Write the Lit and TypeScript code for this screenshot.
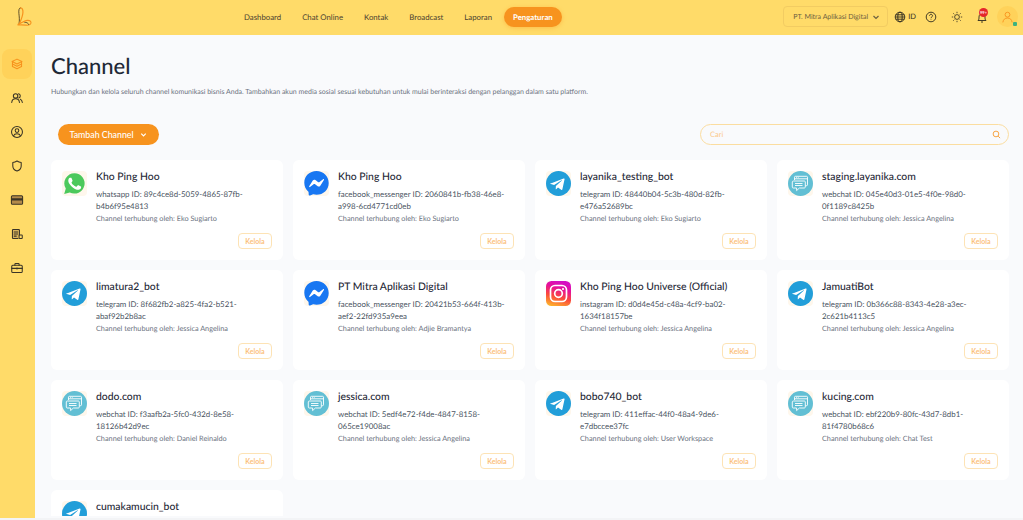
import { LitElement, css, html, svg, nothing } from 'lit'
import { customElement } from 'lit/decorators.js'

type Kind = "whatsapp" | "messenger" | "telegram" | "webchat" | "instagram"

interface Channel {
  name: string
  kind: Kind
  label?: string
  id?: string
  by?: string
}

const channels: Channel[] = [
  { name: "Kho Ping Hoo", kind: "whatsapp", label: "whatsapp", id: "89c4ce8d-5059-4865-87fb-b4b6f95e4813", by: "Eko Sugiarto" },
  { name: "Kho Ping Hoo", kind: "messenger", label: "facebook_messenger", id: "2060841b-fb38-46e8-a998-6cd4771cd0eb", by: "Eko Sugiarto" },
  { name: "layanika_testing_bot", kind: "telegram", label: "telegram", id: "48440b04-5c3b-480d-82fb-e476a52689bc", by: "Eko Sugiarto" },
  { name: "staging.layanika.com", kind: "webchat", label: "webchat", id: "045e40d3-01e5-4f0e-98d0-0f1189c8425b", by: "Jessica Angelina" },
  { name: "limatura2_bot", kind: "telegram", label: "telegram", id: "8f682fb2-a825-4fa2-b521-abaf92b2b8ac", by: "Jessica Angelina" },
  { name: "PT Mitra Aplikasi Digital", kind: "messenger", label: "facebook_messenger", id: "20421b53-664f-413b-aef2-22fd935a9eea", by: "Adjie Bramantya" },
  { name: "Kho Ping Hoo Universe (Official)", kind: "instagram", label: "instagram", id: "d0d4e45d-c48a-4cf9-ba02-1634f18157be", by: "Jessica Angelina" },
  { name: "JamuatiBot", kind: "telegram", label: "telegram", id: "0b366c88-8343-4e28-a3ec-2c621b4113c5", by: "Jessica Angelina" },
  { name: "dodo.com", kind: "webchat", label: "webchat", id: "f3aafb2a-5fc0-432d-8e58-18126b42d9ec", by: "Daniel Reinaldo" },
  { name: "jessica.com", kind: "webchat", label: "webchat", id: "5edf4e72-f4de-4847-8158-065ce19008ac", by: "Jessica Angelina" },
  { name: "bobo740_bot", kind: "telegram", label: "telegram", id: "411effac-44f0-48a4-9de6-e7dbccee37fc", by: "User Workspace" },
  { name: "kucing.com", kind: "webchat", label: "webchat", id: "ebf220b9-80fc-43d7-8db1-81f4780b68c6", by: "Chat Test" },
  // only the top of this card is on screen
  { name: "cumakamucin_bot", kind: "telegram" },
]

const navItems = ["Dashboard", "Chat Online", "Kontak", "Broadcast", "Laporan", "Pengaturan"]

const brandIcons: Record<Kind, unknown> = {
  whatsapp: svg`
    <path fill="#4cc95c" d="M12.6 2.2a10.2 10.2 0 0 0-8.8 15.4L2.2 23l5.6-1.5A10.2 10.2 0 1 0 12.6 2.2z"/>
    <path fill="#fff" d="M9.600 7.200c-.2-.5-.4-.5-.7-.5h-.6c-.2 0-.6.1-.9.4-.3.3-1.100 1.100-1.100 2.700s1.200 3.100 1.300 3.300c.2.200 2.200 3.500 5.400 4.800 2.700 1.100 3.200.9 3.800.8.600-.1 1.900-.8 2.100-1.500.3-.7.3-1.300.2-1.500-.1-.1-.3-.2-.6-.4l-2.100-1.100c-.3-.1-.5-.2-.7.2l-1 1.200c-.2.200-.4.300-.7.100-.3-.2-1.300-.5-2.600-1.600-1-.9-1.600-1.900-1.800-2.200-.2-.3 0-.5.100-.7l.5-.6c.2-.2.200-.3.300-.5.100-.2.100-.4 0-.6l-.9-2.300z"/>`,
  messenger: svg`
    <path fill="#1877f2" d="M12.500 0C5.600 0 .3 5 .3 11.800c0 3.600 1.500 6.700 3.900 8.800.2.200.3.500.4.800l.1 2.200c0 .700.700 1.200 1.400.900l2.500-1.100c.2-.1.500-.1.700-.1 1 .3 2.100.5 3.200.5 6.900 0 12.200-5 12.200-11.800S19.400 0 12.500 0z"/>
    <path fill="#fff" d="M5.200 15.300l3.600-5.700c.6-.9 1.800-1.100 2.600-.5l2.900 2.100c.3.200.6.200.9 0l3.900-3c.5-.4 1.200.2.800.8l-3.600 5.700c-.6.900-1.800 1.100-2.600.5l-2.900-2.100c-.3-.2-.6-.2-.9 0l-3.900 3c-.5.400-1.200-.2-.8-.8z"/>`,
  telegram: svg`
    <circle cx="12.500" cy="12.500" r="12.500" fill="#229ed9"/>
    <path fill="#fff" d="M5.400 12.300l12.200-4.800c.6-.2 1.100.1.900 1l-2.100 9.800c-.1.700-.6.900-1.200.5l-3.200-2.400-1.600 1.500c-.2.200-.3.300-.7.300l.2-3.300 6-5.400c.3-.2-.1-.4-.4-.2l-7.400 4.700-3.200-1c-.7-.2-.7-.7.100-1z"/>`,
  webchat: svg`
    <circle cx="12.500" cy="12.500" r="12.500" fill="#62bfd4"/>
    <g fill="none" stroke="#fff" stroke-width=".9" stroke-linejoin="round">
      <path d="M6.500 9V6.200c0-.5.400-.9.900-.9h11.200c.5 0 .9.400.9.900v7.600c0 .5-.4.900-.9.900h-1.200"/>
      <path d="M6.500 7.800h13M8 6.600h.8M9.800 6.600h.8"/>
      <path d="M5.200 10h11.200c.5 0 .9.400.9.900v5.200c0 .5-.4.900-.9.900h-5l-2.800 2.600V17H5.200c-.5 0-.9-.4-.9-.9v-5.200c0-.5.400-.9.900-.9z"/>
      <path d="M7 12.500h7.500M7 14.500h7.500"/>
    </g>`,
  instagram: svg`
    <defs>
      <linearGradient id="ig" x1="0.200" y1="1" x2="0.500" y2="0">
        <stop offset="0" stop-color="#fdb52b"/>
        <stop offset="0.400" stop-color="#fb4a3c"/>
        <stop offset="0.750" stop-color="#e5109c"/>
        <stop offset="1" stop-color="#d40fc4"/>
      </linearGradient>
    </defs>
    <rect width="25" height="25" rx="5.500" fill="url(#ig)"/>
    <rect x="4.500" y="4.500" width="16" height="16" rx="4.500" fill="none" stroke="#fff" stroke-width="1.700"/>
    <circle cx="12.500" cy="12.500" r="3.800" fill="none" stroke="#fff" stroke-width="1.700"/>
    <circle cx="17" cy="8" r="1.100" fill="#fff"/>`,
}

const sideIcons = [
  svg`<path d="M10 3l7 3.500-7 3.500-7-3.500z"/><path d="M3.500 10L10 13.200 16.500 10"/><path d="M3.500 13.500L10 16.800l6.500-3.300"/><path d="M3.500 6.800v6.700M16.500 6.800v6.700"/>`,
  svg`<circle cx="8" cy="7" r="3.200"/><path d="M2.500 16.500c.3-3.400 2.500-5.300 5.500-5.300s5.200 1.900 5.500 5.300"/><path d="M12 3.900a3.200 3.200 0 0 1 .5 6.200M14.800 11.700c1.700.8 2.600 2.500 2.800 4.800"/>`,
  svg`<circle cx="10" cy="10" r="7.800"/><circle cx="10" cy="8" r="2.600"/><path d="M5 15.500c.8-2 2.700-3 5-3s4.200 1 5 3"/>`,
  svg`<path d="M10 2.800c2 1.300 3.800 1.900 6 2.100v5c0 3.500-2.300 6-6 7.300-3.700-1.300-6-3.800-6-7.300v-5c2.200-.2 4-.8 6-2.100z"/>`,
  svg`<rect x="2" y="4" width="16" height="12" rx="1.500" fill="#b38a4a"/><rect x="2" y="7.500" width="16" height="3.200" fill="currentColor" stroke="none"/>`,
  svg`<path d="M13.500 11V4.500c0-.6-.4-1-1-1h-8c-.6 0-1 .4-1 1v11c0 .6.400 1 1 1h7" fill="#d9b35c"/><path d="M6 7h5M6 10h5M6 13h3"/><rect x="13" y="11.500" width="4.500" height="5" rx=".8"/>`,
  svg`<rect x="2.500" y="6" width="15" height="10.500" rx="1.500"/><path d="M7 6V4.500c0-.6.400-1 1-1h4c.6 0 1 .4 1 1V6M2.500 10.500h15M10 9.500v2"/>`,
]

@customElement("app-root")
export class AppRoot extends LitElement {
  renderCard(c: Channel) {
    return html`
      <article class="card">
        <svg class="brand" viewBox="0 0 25 25">${brandIcons[c.kind]}</svg>
        <div class="info">
          <h2>${c.name}</h2>
          ${c.id
            ? html`
                <p class="id">${`${c.label} ID: ${c.id}`}</p>
                <p class="by">${`Channel terhubung oleh: ${c.by}`}</p>
                <div class="actions"><button class="manage">Kelola</button></div>
              `
            : nothing}
        </div>
      </article>
    `
  }

  render() {
    return html`
      <header>
        <svg class="logo" viewBox="0 0 15 19" fill="none" stroke-linecap="round">
          <path d="M3.500.8C2 1 1.600 3 1.900 6.500c.3 3 .8 6.500.2 10" stroke="#3a2d1c" stroke-width=".8"/>
          <path d="M3.500.8c2 .2 2.600 2.400 2.400 4.900-.3 3.800-1.900 7.200-3.400 10.800" stroke="#f7931e" stroke-width="1.200"/>
          <path d="M1 17.300c3-.9 5.800-3.400 9-3.900 2.800-.4 4.300 1.100 3.900 2.800-.5 1.800-2.800 2.300-5.300 1.900-2.600-.3-5.400-.3-7.600-.1" stroke="#f7931e" stroke-width="1.100"/>
          <path d="M7.800 15.500c1.700-.4 3.300.3 3.900 2" stroke="#3a2d1c" stroke-width=".7"/>
        </svg>
        <nav>
          ${navItems.map((n) => html`<a class=${n === "Pengaturan" ? "active" : ""}>${n}</a>`)}
        </nav>
        <div class="tools">
          <div class="company">
            <span>PT. Mitra Aplikasi Digital</span>
            <svg viewBox="0 0 10 10" fill="none" stroke="currentColor" stroke-width="1.200"><path d="M2.500 4l2.500 2.500L7.500 4"/></svg>
          </div>
          <div class="lang">
            <svg class="tool" viewBox="0 0 12 12" fill="none" stroke="#2f2a1e" stroke-width=".9"><circle cx="6" cy="6" r="4.800"/><ellipse cx="6" cy="6" rx="2.200" ry="4.800"/><path d="M1.200 6h9.600M1.800 3.800h8.400M1.800 8.200h8.400"/></svg>
            <span>ID</span>
          </div>
          <svg class="tool help" viewBox="0 0 12 12" fill="none" stroke="#2f2a1e" stroke-width=".9"><circle cx="6" cy="6" r="4.800"/><path d="M4.500 4.800c0-2 3-2 3 0 0 1.200-1.500 1.100-1.500 2.400"/><path d="M6 8.500v.5"/></svg>
          <svg class="tool sun" viewBox="0 0 12 12" fill="none" stroke="#2f2a1e" stroke-width=".8"><circle cx="6" cy="6" r="2.400"/><path d="M6 .8v1.400M6 9.800v1.400M.8 6h1.400M9.800 6h1.400M2.300 2.300l1 1M8.700 8.700l1 1M2.300 9.700l1-1M8.700 3.300l1-1"/></svg>
          <div class="bell">
            <svg class="tool" viewBox="0 0 12 12" fill="none" stroke="#2f2a1e" stroke-width=".9"><path d="M2 9.500c1-.8 1-2 1-3.500 0-2 1.300-3.300 3-3.300S9 4 9 6c0 1.500 0 2.700 1 3.500z"/><path d="M5 11h2"/></svg>
            <span class="badge">99+</span>
          </div>
          <div class="avatar">
            <svg viewBox="0 0 14 14" fill="none" stroke="#f7931e" stroke-width="1"><circle cx="7" cy="4.500" r="2.600"/><path d="M2 12.800c.3-3 2.300-4.700 5-4.700s4.700 1.700 5 4.700"/></svg>
            <span class="dot"></span>
          </div>
        </div>
      </header>
      <div class="body">
        <aside>
          ${sideIcons.map((icon, i) => html`
            <div class="side ${i === 0 ? "active" : ""}">
              <svg viewBox="0 0 20 20" fill="none" stroke="currentColor" stroke-width="1.500" stroke-linecap="round" stroke-linejoin="round">${icon}</svg>
            </div>
          `)}
        </aside>
        <main>
          <h1>Channel</h1>
          <p class="lead">Hubungkan dan kelola seluruh channel komunikasi bisnis Anda. Tambahkan akun media sosial sesuai kebutuhan untuk mulai berinteraksi dengan pelanggan dalam satu platform.</p>
          <div class="toolbar">
            <button class="add">
              Tambah Channel
              <svg viewBox="0 0 10 10" fill="none" stroke="#fff" stroke-width="1.300"><path d="M2.500 4l2.500 2.500L7.500 4"/></svg>
            </button>
            <div class="search">
              <span>Cari</span>
              <svg viewBox="0 0 12 12" fill="none" stroke="#f7931e" stroke-width="1.100"><circle cx="5.300" cy="5.300" r="3.800"/><path d="M8.200 8.200l2.600 2.600"/></svg>
            </div>
          </div>
          <section class="grid">${channels.map((c) => this.renderCard(c))}</section>
        </main>
      </div>
    `
  }

  static styles = css`
    :host {
      display: block;
      height: 520px;
      overflow: hidden;
      font-family: Lato, "Liberation Sans", sans-serif;
      text-rendering: geometricPrecision;
      color: #1f2937;
      background: #f3f4f6;
    }

    header {
      display: flex;
      align-items: center;
      box-sizing: border-box;
      height: 35px;
      padding-bottom: 2px;
      background: #ffdb69;
    }
    .logo {
      width: 15px;
      height: 19px;
      margin-left: 17px;
      margin-right: 203px;
    }
    nav {
      display: flex;
      gap: 3px;
    }
    nav a {
      display: flex;
      align-items: center;
      height: 20px;
      padding: 0 9px;
      font-size: 7.800px;
      color: #4a4030;
      border-radius: 10px;
    }
    nav a.active {
      background: #f7931e;
      color: #fff;
      font-weight: 700;
      box-shadow: 0 1px 4px rgba(247, 147, 30, 0.4);
    }
    .tools {
      display: flex;
      align-items: center;
      margin-left: auto;
      margin-right: 5px;
    }
    .company {
      display: flex;
      align-items: center;
      justify-content: space-between;
      box-sizing: border-box;
      width: 105px;
      height: 21px;
      padding: 0 6px 0 9px;
      border: 1px solid #f2cc62;
      border-radius: 4px;
      font-size: 7px;
      white-space: nowrap;
      color: #6d6040;
      margin-right: 6px;
    }
    .company svg {
      width: 10px;
      height: 10px;
    }
    .tool {
      display: block;
      width: 12px;
      height: 12px;
    }
    .lang {
      display: flex;
      align-items: center;
      gap: 2px;
      font-size: 7.500px;
      color: #2f2a1e;
    }
    .help {
      margin-left: 9px;
    }
    .sun {
      margin-left: 14px;
    }
    .bell {
      position: relative;
      margin-left: 13px;
    }
    .badge {
      position: absolute;
      top: -3px;
      left: 3px;
      width: 9px;
      height: 9px;
      border-radius: 50%;
      background: #e5262b;
      color: #fff;
      font-size: 4px;
      font-weight: 700;
      line-height: 9px;
      text-align: center;
    }
    .avatar {
      position: relative;
      display: flex;
      align-items: center;
      justify-content: center;
      width: 21px;
      height: 21px;
      margin-left: 9px;
      border-radius: 50%;
      background: #ffd25a;
    }
    .avatar svg {
      width: 13px;
      height: 14px;
    }
    .dot {
      position: absolute;
      right: 1px;
      bottom: 1px;
      width: 4px;
      height: 4px;
      background: #3fb27f;
      border-radius: 1px;
    }

    .body {
      display: flex;
      height: 483px;
    }
    aside {
      display: flex;
      flex-direction: column;
      align-items: center;
      gap: 4px;
      width: 35px;
      flex: none;
      padding: 14px 2px 0 0;
      box-sizing: border-box;
      background: #ffdb69;
    }
    .side {
      display: flex;
      align-items: center;
      justify-content: center;
      width: 30px;
      height: 30px;
      border-radius: 8px;
      color: #3a3426;
    }
    .side.active {
      background: #ffd25a;
      color: #f7931e;
    }
    .side svg {
      width: 14px;
      height: 14px;
    }

    main {
      flex: 1;
      min-width: 0;
      box-sizing: border-box;
      height: 483px;
      overflow: hidden;
      padding: 0 14px 0 16px;
      background: #f9fafc;
      border-bottom: 2px solid #f9fafc;
    }
    h1 {
      margin: 18px 0 0;
      font-size: 22px;
      line-height: 26px;
      font-weight: 500;
      color: #1f2937;
    }
    .lead {
      margin: 8px 0 0;
      font-size: 7px;
      line-height: 10px;
      color: #6b7280;
    }
    .toolbar {
      display: flex;
      align-items: center;
      justify-content: space-between;
      margin: 27px 0 15px 7px;
    }
    .add {
      display: flex;
      align-items: center;
      justify-content: center;
      gap: 5px;
      width: 101px;
      height: 21px;
      border: none;
      padding: 0;
      border-radius: 11px;
      background: #f7931e;
      color: #fff;
      font: 500 8.800px Lato, sans-serif;
    }
    .add svg {
      width: 9px;
      height: 9px;
    }
    .search {
      display: flex;
      align-items: center;
      justify-content: space-between;
      box-sizing: border-box;
      width: 309px;
      height: 21px;
      padding: 0 7px 0 9px;
      border: 1px solid #fbdda0;
      border-radius: 11px;
      font-size: 7.500px;
      color: #fbc98a;
    }
    .search svg {
      width: 9px;
      height: 9px;
    }

    .grid {
      display: grid;
      grid-template-columns: repeat(4, 232px);
      grid-auto-rows: 100px;
      gap: 10px;
    }
    .card {
      display: flex;
      gap: 9px;
      box-sizing: border-box;
      padding: 11px 11px 0;
      background: #fff;
      border-radius: 6px;
    }
    .brand {
      flex: none;
      width: 25px;
      height: 25px;
      background: #fef7ec;
      border-radius: 4px;
    }
    .info {
      flex: 1;
      min-width: 0;
    }
    h2 {
      margin: 0;
      font-size: 10.400px;
      line-height: 13px;
      font-weight: 500;
      color: #1f2937;
    }
    .id {
      margin: 4px 0 0;
      font-size: 7.900px;
      line-height: 12px;
      color: #4b5563;
      overflow-wrap: anywhere;
    }
    .by {
      margin: 2px 0 0;
      font-size: 7.300px;
      line-height: 9px;
      color: #6b7280;
    }
    .actions {
      display: flex;
      justify-content: flex-end;
      margin-top: 10px;
    }
    .manage {
      width: 34px;
      height: 16px;
      padding: 0;
      background: #fff;
      border: 1px solid #fde3b5;
      border-radius: 4px;
      color: #fbbf7c;
      font: 700 7px Lato, sans-serif;
    }
  `
}

declare global {
  interface HTMLElementTagNameMap {
    "app-root": AppRoot
  }
}
